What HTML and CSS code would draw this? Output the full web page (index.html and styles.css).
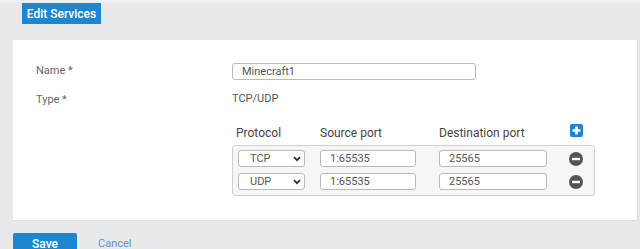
FILE: index.html
```html
<!DOCTYPE html>
<html lang="en">
<head>
    <meta charset="UTF-8">
    <title>Edit Services</title>
    <link rel="stylesheet" href="styles.css">
</head>
<body>

    <div class="top-bar">
        <button class="tab-button">Edit Services</button>
    </div>

    <div class="panel">
        <div class="form-row">
            <label class="form-label">Name *</label>
            <input type="text" class="text-input name-input" value="Minecraft1">
        </div>

        <div class="form-row type-row">
            <label class="form-label">Type *</label>
            <span class="type-value">TCP/UDP</span>
        </div>

        <div class="ports">
            <div class="ports-head">
                <span class="col-proto">Protocol</span>
                <span class="col-src">Source port</span>
                <span class="col-dst">Destination port</span>
                <span class="icon-btn add-btn">
                    <svg width="13" height="13" viewBox="0 0 13 13">
                        <rect x="0" y="0" width="13" height="13" rx="2" fill="#1c86d1"/>
                        <rect x="5.2" y="2.5" width="2.6" height="8" fill="#fff"/>
                        <rect x="2.5" y="5.2" width="8" height="2.6" fill="#fff"/>
                    </svg>
                </span>
            </div>

            <div class="ports-box">
                <div class="port-row">
                    <div class="col-proto">
                        <div class="select-wrap">
                            <select class="proto-select">
                                <option selected>TCP</option>
                                <option>UDP</option>
                            </select>
                            <svg class="chevron" width="8" height="6" viewBox="0 0 8 6">
                                <path d="M1 1.2 L4 4.2 L7 1.2" fill="none" stroke="#333" stroke-width="1.8"/>
                            </svg>
                        </div>
                    </div>
                    <div class="col-src"><input type="text" class="text-input port-src" value="1:65535"></div>
                    <div class="col-dst"><input type="text" class="text-input port-dst" value="25565"></div>
                    <span class="icon-btn">
                        <svg width="14" height="14" viewBox="0 0 14 14">
                            <circle cx="7" cy="7" r="7" fill="#555"/>
                            <rect x="3" y="5.8" width="8" height="2.4" fill="#fff"/>
                        </svg>
                    </span>
                </div>

                <div class="port-row">
                    <div class="col-proto">
                        <div class="select-wrap">
                            <select class="proto-select">
                                <option>TCP</option>
                                <option selected>UDP</option>
                            </select>
                            <svg class="chevron" width="8" height="6" viewBox="0 0 8 6">
                                <path d="M1 1.2 L4 4.2 L7 1.2" fill="none" stroke="#333" stroke-width="1.8"/>
                            </svg>
                        </div>
                    </div>
                    <div class="col-src"><input type="text" class="text-input port-src" value="1:65535"></div>
                    <div class="col-dst"><input type="text" class="text-input port-dst" value="25565"></div>
                    <span class="icon-btn">
                        <svg width="14" height="14" viewBox="0 0 14 14">
                            <circle cx="7" cy="7" r="7" fill="#555"/>
                            <rect x="3" y="5.8" width="8" height="2.4" fill="#fff"/>
                        </svg>
                    </span>
                </div>
            </div>
        </div>
    </div>

    <div class="actions">
        <button class="save-button">Save</button>
        <a href="#" class="cancel-link">Cancel</a>
    </div>

</body>
</html>
```

FILE: styles.css
```css
* {
    margin: 0;
    padding: 0;
    box-sizing: border-box;
}

body {
    font-family: Roboto, 'Liberation Sans', sans-serif;
    font-size: 11px;
    color: #555;
    background-color: #e8e9eb;
    border-top: 2px solid #f1f1f2;
    overflow: hidden;
}

.top-bar {
    padding: 1px 0 0 22px;
    height: 38px;
}

.tab-button {
    width: 79px;
    height: 21px;
    font-family: inherit;
    font-size: 12px;
    font-weight: 500;
    color: #fff;
    background-color: #1c86d1;
    border: none;
}

.panel {
    margin: 0 2px 0 13px;
    padding: 23px 0 24px 23px;
    background: #fff;
    border-right: 1px solid #dcdde0;
    border-bottom: 1px solid #dcdde0;
}

.form-row {
    display: flex;
    align-items: flex-start;
}

.form-label {
    width: 196px;
    padding-top: 1px;
    color: #666;
}

.text-input {
    height: 17px;
    padding: 0 9px;
    font-family: inherit;
    font-size: 11px;
    color: #555;
    background: #fff;
    border: 1px solid #b9b9b9;
    border-radius: 3px;
    outline: none;
}

.name-input {
    width: 244px;
}

.type-row {
    margin-top: 12px;
}

.type-value {
    color: #555;
}

.ports {
    margin: 19px 0 0 196px;
    width: 363px;
}

.ports-head {
    display: flex;
    align-items: center;
    height: 16px;
    padding-left: 4px;
    margin-bottom: 4px;
    font-size: 12px;
    color: #444;
}

.ports-head .col-proto {
    width: 84px;
}

.col-proto {
    width: 82px;
}

.col-src {
    width: 119px;
}

.col-dst {
    width: 130px;
}

.icon-btn {
    display: flex;
    width: 14px;
    height: 14px;
    align-items: center;
    justify-content: center;
}

.add-btn {
    margin-top: -6px;
}

.ports-box {
    padding: 4px 11px 5px 5px;
    background: #f6f6f7;
    border: 1px solid #cfd0d2;
    border-radius: 3px;
    display: flex;
    flex-direction: column;
    gap: 6px;
}

.port-row {
    display: flex;
    align-items: center;
    height: 17px;
}

.select-wrap {
    position: relative;
    width: 67px;
    height: 17px;
}

.proto-select {
    appearance: none;
    width: 67px;
    height: 17px;
    padding-left: 11px;
    font-family: inherit;
    font-size: 11px;
    color: #555;
    background: #fff;
    border: 1px solid #b9b9b9;
    border-radius: 3px;
    outline: none;
}

.chevron {
    position: absolute;
    right: 4px;
    top: 6px;
    pointer-events: none;
}

.port-src {
    width: 96px;
}

.port-dst {
    width: 108px;
}

.actions {
    display: flex;
    align-items: center;
    gap: 21px;
    padding: 12px 0 0 13px;
}

.save-button {
    width: 64px;
    height: 21px;
    font-family: inherit;
    font-size: 12px;
    font-weight: 500;
    color: #fff;
    background-color: #1c86d1;
    border: none;
    border-radius: 2px;
}

.cancel-link {
    font-size: 11px;
    color: #5e91ca;
    text-decoration: none;
}
```
